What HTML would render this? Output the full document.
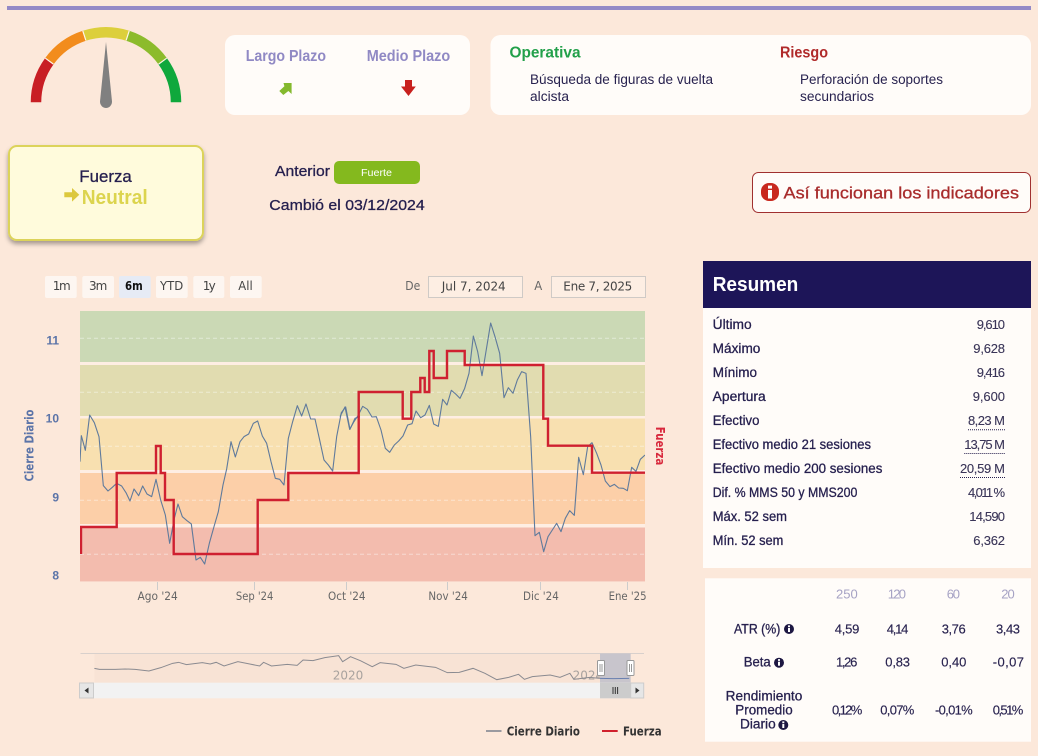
<!DOCTYPE html>
<html lang="es"><head><meta charset="utf-8"><title>Resumen</title>
<style>
html,body{margin:0;padding:0;width:1038px;height:756px;overflow:hidden;background:#fce8da}
svg{display:block}
text{font-family:"Liberation Sans",sans-serif;fill:#251f4e}
.m{font-weight:400;stroke:#251f4e;stroke-width:.3px}
.b{font-weight:700}
.dv{font-family:"DejaVu Sans",sans-serif}
.r{font-size:13.5px}
.v{font-size:13px;text-anchor:end;fill:#3a3558;stroke:#3a3558;stroke-width:.12px}
.t{font-size:13.5px;fill:#28224f}
.n{font-size:13px;fill:#28224f;stroke:#28224f;stroke-width:.15px}
.h{font-size:13px;fill:#a6a2c4}
.ax{font-family:"DejaVu Sans",sans-serif;font-size:11.5px;fill:#666}
.rb{font-family:"DejaVu Sans",sans-serif;font-size:12px;fill:#444}
.y{font-size:12px;font-weight:700;fill:#5b74a8;text-anchor:end}
</style></head><body>
<svg width="1038" height="756" viewBox="0 0 1038 756" xmlns="http://www.w3.org/2000/svg">
<defs>
<filter id="sh" x="-10%" y="-10%" width="120%" height="125%"><feDropShadow dx="0" dy="3" stdDeviation="2.5" flood-color="#000" flood-opacity=".35"/></filter>
<clipPath id="cl"><rect x="80" y="300" width="565" height="285"/></clipPath>
</defs>
<rect width="1038" height="756" fill="#fce8da"/>
<rect x="7" y="6" width="1024" height="4" fill="#9489c6"/>

<!-- gauge -->
<g fill="none" stroke-width="10.5">
<path d="M36 102.3A70 70 0 0 1 49.37 61.16" stroke="#c81e24"/>
<path d="M49.37 61.16A70 70 0 0 1 84.37 35.73" stroke="#f28c1c"/>
<path d="M84.37 35.73A70 70 0 0 1 127.63 35.73" stroke="#dccf3c"/>
<path d="M127.63 35.73A70 70 0 0 1 162.63 61.16" stroke="#8cbb2c"/>
<path d="M162.63 61.16A70 70 0 0 1 176 102.3" stroke="#0fa83c"/>
</g>
<g stroke="#fff6ea" stroke-width="1.2">
<path d="M45.3 58.2L53.4 64.1M82.8 30.9L85.9 40.5M129.2 30.9L126.1 40.5M166.7 58.2L158.6 64.1"/>
</g>
<path d="M106 42L100 101.5A6 6.5 0 0 0 112 101.5Z" fill="#808080"/>

<!-- plazo card -->
<rect x="225" y="35" width="245" height="80" rx="10" fill="#fffcf9"/>
<text class="b" x="245.7" y="61" font-size="16" textLength="80.3" lengthAdjust="spacingAndGlyphs" style="fill:#9089c4">Largo Plazo</text>
<text class="b" x="366.7" y="61" font-size="16" textLength="83.5" lengthAdjust="spacingAndGlyphs" style="fill:#9089c4">Medio Plazo</text>
<path d="M283.5 83H291.6V94L288.4 91L283.3 95L279.3 91L284.4 86.2Z" fill="#84b92e"/>
<path d="M405 80H412V86.5H415.8L408.5 96L401 86.5H405Z" fill="#c8201e"/>

<!-- operativa card -->
<rect x="490.5" y="35" width="540.5" height="80" rx="10" fill="#fffcf9"/>
<text class="b" x="509.5" y="57.3" font-size="16" textLength="71" lengthAdjust="spacingAndGlyphs" style="fill:#22a04a">Operativa</text>
<text class="b" x="780" y="57.3" font-size="16" textLength="48" lengthAdjust="spacingAndGlyphs" style="fill:#b02a2a">Riesgo</text>
<text class="t" x="530" y="84" textLength="183" lengthAdjust="spacingAndGlyphs">Búsqueda de figuras de vuelta</text>
<text class="t" x="530" y="101" textLength="39" lengthAdjust="spacingAndGlyphs">alcista</text>
<text class="t" x="800" y="84" textLength="143" lengthAdjust="spacingAndGlyphs">Perforación de soportes</text>
<text class="t" x="800" y="101" textLength="74" lengthAdjust="spacingAndGlyphs">secundarios</text>

<!-- fuerza box -->
<rect x="9" y="146" width="194" height="94" rx="8" fill="#fffbdc" stroke="#dcd35a" stroke-width="2" filter="url(#sh)"/>
<text class="m" x="79.3" y="182" font-size="17" textLength="52.5" lengthAdjust="spacingAndGlyphs">Fuerza</text>
<text class="b" x="81.7" y="204" font-size="20" textLength="66" lengthAdjust="spacingAndGlyphs" style="fill:#dcd44e">Neutral</text>
<path d="M64.3 192.3H72V188L79.3 194.8L72 201.6V197.3H64.3Z" fill="#dcc83c"/>

<!-- anterior -->
<text class="m" x="275" y="176" font-size="15" textLength="55" lengthAdjust="spacingAndGlyphs">Anterior</text>
<rect x="334" y="161" width="86" height="23" rx="5" fill="#84b91e"/>
<text x="361" y="176" font-size="10.5" textLength="31" lengthAdjust="spacingAndGlyphs" style="fill:#fff">Fuerte</text>
<text class="m" x="269.3" y="210" font-size="15" textLength="155.4" lengthAdjust="spacingAndGlyphs">Cambió el 03/12/2024</text>

<!-- info button -->
<rect x="752.5" y="172.5" width="278" height="40" rx="6" fill="#fffcf9" stroke="#a03030"/>
<rect x="761" y="183" width="18" height="18" rx="8" fill="#c8281e"/>
<rect x="768" y="190" width="4" height="8.5" fill="#fff"/><rect x="768" y="185.6" width="4" height="3" fill="#fff"/>
<text class="m" x="783.5" y="198.5" font-size="17" textLength="235.5" lengthAdjust="spacingAndGlyphs" style="fill:#a82c2c;stroke:#a82c2c">Así funcionan los indicadores</text>

<!-- range selector -->
<g fill="#fdf6f1">
<rect x="45" y="276" width="31.7" height="22" rx="2"/>
<rect x="82.3" y="276" width="31.7" height="22" rx="2"/>
<rect x="119" y="276" width="31.7" height="22" rx="2" fill="#e6ebf5"/>
<rect x="156" y="276" width="31.7" height="22" rx="2"/>
<rect x="193.3" y="276" width="31" height="22" rx="2"/>
<rect x="230" y="276" width="31.7" height="22" rx="2"/>
</g>
<text class="rb" x="52.7" y="290" textLength="18" lengthAdjust="spacing">1m</text>
<text class="rb" x="89" y="290" textLength="18.3" lengthAdjust="spacing">3m</text>
<text class="rb b" x="125" y="290" textLength="17.7" lengthAdjust="spacingAndGlyphs" style="font-weight:700;fill:#111">6m</text>
<text class="rb" x="160" y="290" textLength="23.3" lengthAdjust="spacingAndGlyphs">YTD</text>
<text class="rb" x="202.7" y="290" textLength="13" lengthAdjust="spacing">1y</text>
<text class="rb" x="238.3" y="290" textLength="14.4" lengthAdjust="spacingAndGlyphs">All</text>

<text class="rb" x="405.3" y="290" textLength="15" lengthAdjust="spacingAndGlyphs" style="fill:#666">De</text>
<rect x="428.5" y="276.5" width="94" height="21" fill="#fdeee3" stroke="#cfcac6"/>
<text class="rb" x="441.7" y="290.5" textLength="64" lengthAdjust="spacing">Jul 7, 2024</text>
<text class="rb" x="534.3" y="290" textLength="8" lengthAdjust="spacingAndGlyphs" style="fill:#666">A</text>
<rect x="551.5" y="276.5" width="94" height="21" fill="#fdeee3" stroke="#cfcac6"/>
<text class="rb" x="563.3" y="290.5" textLength="69" lengthAdjust="spacing">Ene 7, 2025</text>

<!-- plot bands -->
<rect x="80" y="311" width="565" height="271" fill="#feeee3"/>
<rect x="80" y="311" width="565" height="51" fill="#cbd9b5"/>
<rect x="80" y="365" width="565" height="51" fill="#e1dcb0"/>
<rect x="80" y="418.5" width="565" height="51.5" fill="#f8e0b0"/>
<rect x="80" y="473" width="565" height="51" fill="#fccfa8"/>
<rect x="80" y="527.5" width="565" height="54" fill="#f3bcae"/>
<g stroke="#fff" stroke-opacity=".45" stroke-width="1" stroke-dasharray="4 3">
<path d="M80 338.3H645M80 392.3H645M80 446.3H645M80 500.3H645M80 554.3H645"/>
</g>
<g stroke="#ccc"><path d="M157.5 582V590M254.5 582V590M346.5 582V590M447.5 582V590M540.5 582V590M627.5 582V590"/></g>

<!-- price line -->
<g clip-path="url(#cl)">
<g transform="translate(20 270) scale(.33333)">
<polyline vector-effect="non-scaling-stroke" fill="none" stroke="#5f7a9c" stroke-width="1.1" stroke-linejoin="round" points="180,575 184,497 196,541 209,435 223,458 237,500 250,647 264,663 277,652 290,640 305,648 318,668 330,693 342,657 356,677 368,648 381,672 395,680 408,628 422,690 436,735 449,820 463,745 474,702 487,740 501,752 514,762 528,870 541,862 554,882 568,820 582,770 595,725 609,645 620,597 633,515 646,561 660,515 672,500 686,492 700,460 713,453 727,498 740,520 753,575 766,625 779,628 792,645 805,505 818,455 832,407 845,438 858,402 872,447 885,447 899,510 912,570 925,585 938,603 950,500 964,428 977,411 990,478 1005,445 1020,440"/>
</g>
<g transform="translate(340 270) scale(.33333)">
<polyline vector-effect="non-scaling-stroke" fill="none" stroke="#5f7a9c" stroke-width="1.1" stroke-linejoin="round" points="0,440 15,411 29,478 42,455 55,435 68,409 82,418 96,441 109,440 123,480 136,535 149,547 163,525 176,513 189,498 203,465 216,461 228,423 242,443 255,435 268,406 281,462 295,469 308,388 321,405 334,361 347,372 360,385 374,355 387,310 400,198 413,245 426,317 452,159 465,200 479,250 492,383 505,353 519,370 532,330 545,305 558,310 572,500 585,797 598,787 611,845 624,800 637,780 650,760 663,785 676,745 689,722 703,736 716,562 730,614 743,530 756,518 770,550 783,585 796,633 810,650 823,643 836,654 850,655 862,662 875,592 888,604 901,568 915,555"/>
</g>
<!-- fuerza step line -->
<path fill="none" stroke="#cf2030" stroke-width="2.4" stroke-linejoin="miter" d="M81 554V527H116.7V473H156V446H160.7V473H165V500H173.7V554H257.7V500H288.3V473H358.7V392H402.7V418.7H411.3V392H420.3V378H424.7V392H429.3V351H433.7V378H447V351H464.7V365H543.3V418.7H548V445.7H592V472.7H645"/>
</g>

<!-- axes -->
<text class="y" x="59" y="344.5">11</text>
<text class="y" x="59" y="422.5">10</text>
<text class="y" x="59" y="501.5">9</text>
<text class="y" x="59" y="579.5">8</text>
<text class="dv" x="33.5" y="445.5" font-size="12" font-weight="700" text-anchor="middle" textLength="72" lengthAdjust="spacingAndGlyphs" transform="rotate(-90 33.5 445.5)" style="fill:#5b74a8">Cierre Diario</text>
<text class="dv" x="656" y="446" font-size="12" font-weight="700" text-anchor="middle" textLength="38.5" lengthAdjust="spacingAndGlyphs" transform="rotate(90 656 446)" style="fill:#d8283c">Fuerza</text>

<text class="ax" x="137.5" y="600" textLength="40.3" lengthAdjust="spacingAndGlyphs">Ago '24</text>
<text class="ax" x="235.9" y="600" textLength="37.5" lengthAdjust="spacingAndGlyphs">Sep '24</text>
<text class="ax" x="328" y="600" textLength="37.5" lengthAdjust="spacingAndGlyphs">Oct '24</text>
<text class="ax" x="428.4" y="600" textLength="39.5" lengthAdjust="spacingAndGlyphs">Nov '24</text>
<text class="ax" x="523" y="600" textLength="35.8" lengthAdjust="spacingAndGlyphs">Dic '24</text>
<text class="ax" x="608.6" y="600" textLength="38" lengthAdjust="spacingAndGlyphs">Ene '25</text>

<!-- navigator -->
<rect x="94.4" y="654" width="505.6" height="29" fill="#f8e3d5"/>
<path d="M80.5 653.5H644" stroke="#d8d0cc"/>
<text class="dv" x="348" y="679.5" font-size="12" text-anchor="middle" style="fill:#a8a29e">2020</text>
<text class="dv" x="572.6" y="679.5" font-size="12" style="fill:#a8a29e">2024</text>
<rect x="600" y="653.5" width="30.7" height="29.2" fill="#c8c5cc"/>
<g transform="translate(60 590) scale(.39526 .33333)">
<polyline vector-effect="non-scaling-stroke" fill="none" stroke="#8a8a90" stroke-width="1" points="87,235 100,238 120,238 140,238 165,237 190,238 225,243 255,233 285,220 300,217 320,224 360,218 380,222 395,217 415,228 450,215 480,222 505,228 515,217 535,228 575,223 600,226 615,210 640,212 670,203 705,197 715,215 735,200 760,212 790,230 810,218 850,223 870,235 900,225 950,232 980,248 1010,247 1045,235 1075,250 1105,269 1135,262 1160,253 1175,268 1195,260 1240,255 1265,262 1290,250 1300,268 1340,262 1366,265"/>
<polyline vector-effect="non-scaling-stroke" fill="none" stroke="#6a80b0" stroke-width="1" points="1366,265 1400,266 1440,265"/>
</g>
<rect x="79" y="682.7" width="565" height="15.6" fill="#f2f2f2"/>
<rect x="79.5" y="683" width="14" height="15" fill="#e6e6e6" stroke="#ccc"/>
<path d="M88.5 687.5V693.5L84.5 690.5Z" fill="#333"/>
<rect x="600" y="682.7" width="30.7" height="15.6" fill="#ccc"/>
<path d="M613 687V694M615.3 687V694M617.6 687V694" stroke="#333"/>
<rect x="630.7" y="683" width="13" height="15" fill="#e6e6e6" stroke="#ccc"/>
<path d="M635.5 687.5V693.5L639.5 690.5Z" fill="#333"/>
<g fill="#fff" stroke="#999">
<rect x="597.5" y="660.5" width="7" height="15" rx="1"/>
<rect x="627" y="660.5" width="7" height="15" rx="1"/>
</g>
<path d="M600 664V672M602 664V672M629.5 664V672M631.5 664V672" stroke="#999"/>

<!-- legend -->
<path d="M486 731H501.5" stroke="#9a9aa0" stroke-width="2"/>
<text class="dv" x="506.7" y="735.3" font-size="12.5" font-weight="700" textLength="73.3" lengthAdjust="spacingAndGlyphs" style="fill:#333">Cierre Diario</text>
<path d="M602 731H617.7" stroke="#d0202c" stroke-width="2"/>
<text class="dv" x="623" y="735.3" font-size="12.5" font-weight="700" textLength="38.6" lengthAdjust="spacingAndGlyphs" style="fill:#333">Fuerza</text>

<!-- resumen -->
<rect x="703" y="307" width="328" height="261" fill="#fffcf9"/>
<rect x="703" y="261" width="328" height="47" fill="#1d1558"/>
<text class="b" x="712.7" y="291" font-size="20" textLength="85.6" lengthAdjust="spacingAndGlyphs" style="fill:#fff">Resumen</text>
<g>
<text class="r m" x="712.7" y="329" textLength="39" lengthAdjust="spacingAndGlyphs">Último</text>
<text class="r m" x="712.7" y="353" textLength="47.7" lengthAdjust="spacingAndGlyphs">Máximo</text>
<text class="r m" x="712.7" y="377" textLength="44.3" lengthAdjust="spacingAndGlyphs">Mínimo</text>
<text class="r m" x="712.7" y="401" textLength="53" lengthAdjust="spacingAndGlyphs">Apertura</text>
<text class="r m" x="712.7" y="425" textLength="46.7" lengthAdjust="spacingAndGlyphs">Efectivo</text>
<text class="r m" x="712.7" y="449" textLength="158.3" lengthAdjust="spacingAndGlyphs">Efectivo medio 21 sesiones</text>
<text class="r m" x="712.7" y="473" textLength="169.7" lengthAdjust="spacingAndGlyphs">Efectivo medio 200 sesiones</text>
<text class="r m" x="712.7" y="497" textLength="144.7" lengthAdjust="spacingAndGlyphs">Dif. % MMS 50 y MMS200</text>
<text class="r m" x="712.7" y="521" textLength="74.3" lengthAdjust="spacingAndGlyphs">Máx. 52 sem</text>
<text class="r m" x="712.7" y="545" textLength="70.7" lengthAdjust="spacingAndGlyphs">Mín. 52 sem</text>
<text class="v" x="1005" y="329" textLength="28.3" lengthAdjust="spacing">9,610</text>
<text class="v" x="1005" y="353" textLength="31.7" lengthAdjust="spacing">9,628</text>
<text class="v" x="1005" y="377" textLength="28.3" lengthAdjust="spacing">9,416</text>
<text class="v" x="1005" y="401" textLength="32.3" lengthAdjust="spacing">9,600</text>
<text class="v" x="1005" y="425" textLength="37" lengthAdjust="spacing">8,23 M</text>
<text class="v" x="1005" y="449" textLength="40.7" lengthAdjust="spacing">13,75 M</text>
<text class="v" x="1005" y="473" textLength="45" lengthAdjust="spacing">20,59 M</text>
<text class="v" x="1005" y="497" textLength="37" lengthAdjust="spacing">4,011 %</text>
<text class="v" x="1005" y="521" textLength="35.7" lengthAdjust="spacing">14,590</text>
<text class="v" x="1005" y="545" textLength="31.7" lengthAdjust="spacing">6,362</text>
</g>
<g stroke="#251f4e" stroke-width="1" stroke-dasharray="1 1">
<path d="M968 429.7H1005M964.3 453.5H1005M960 477.5H1005"/>
</g>

<!-- metrics table -->
<rect x="705" y="578.3" width="326" height="163.4" fill="#fffcf9"/>
<text class="h" x="836" y="598.7" textLength="21.7" lengthAdjust="spacing">250</text>
<text class="h" x="887.7" y="598.7" textLength="18.3" lengthAdjust="spacing">120</text>
<text class="h" x="946.7" y="598.7" textLength="13.3" lengthAdjust="spacing">60</text>
<text class="h" x="1001.3" y="598.7" textLength="13.4" lengthAdjust="spacing">20</text>

<text class="t m" x="734" y="633.3" textLength="46.3" lengthAdjust="spacingAndGlyphs">ATR (%)</text>
<text class="n" x="834.7" y="633.3" textLength="24.6" lengthAdjust="spacing">4,59</text>
<text class="n" x="886.7" y="633.3" textLength="21.6" lengthAdjust="spacing">4,14</text>
<text class="n" x="941.7" y="633.3" textLength="24" lengthAdjust="spacing">3,76</text>
<text class="n" x="996" y="633.3" textLength="24" lengthAdjust="spacing">3,43</text>

<text class="t m" x="743.7" y="666.7" textLength="27" lengthAdjust="spacingAndGlyphs">Beta</text>
<text class="n" x="836" y="666.7" textLength="21.3" lengthAdjust="spacing">1,26</text>
<text class="n" x="885.3" y="666.7" textLength="24.7" lengthAdjust="spacing">0,83</text>
<text class="n" x="941.3" y="666.7" textLength="25" lengthAdjust="spacing">0,40</text>
<text class="n" x="992.7" y="666.7" textLength="31.3" lengthAdjust="spacing">-0,07</text>

<text class="t m" x="725.7" y="700.7" textLength="76.6" lengthAdjust="spacingAndGlyphs">Rendimiento</text>
<text class="t m" x="735.3" y="714.7" textLength="57.4" lengthAdjust="spacingAndGlyphs">Promedio</text>
<text class="t m" x="740" y="728.7" textLength="35.7" lengthAdjust="spacingAndGlyphs">Diario</text>
<text class="n" x="832" y="714.7" textLength="30.3" lengthAdjust="spacing">0,12%</text>
<text class="n" x="880.3" y="714.7" textLength="34" lengthAdjust="spacing">0,07%</text>
<text class="n" x="935" y="714.7" textLength="37.7" lengthAdjust="spacing">-0,01%</text>
<text class="n" x="992.7" y="714.7" textLength="30.6" lengthAdjust="spacing">0,51%</text>

<g fill="#1d1742">
<circle cx="789" cy="629" r="5"/><circle cx="779" cy="662.7" r="5"/><circle cx="783.3" cy="725" r="5"/>
</g>
<g fill="#fff">
<rect x="788" y="628" width="2" height="4"/><rect x="788" y="625.4" width="2" height="1.8"/>
<rect x="778" y="661.7" width="2" height="4"/><rect x="778" y="659.1" width="2" height="1.8"/>
<rect x="782.3" y="724" width="2" height="4"/><rect x="782.3" y="721.4" width="2" height="1.8"/>
</g>
</svg>
</body></html>
